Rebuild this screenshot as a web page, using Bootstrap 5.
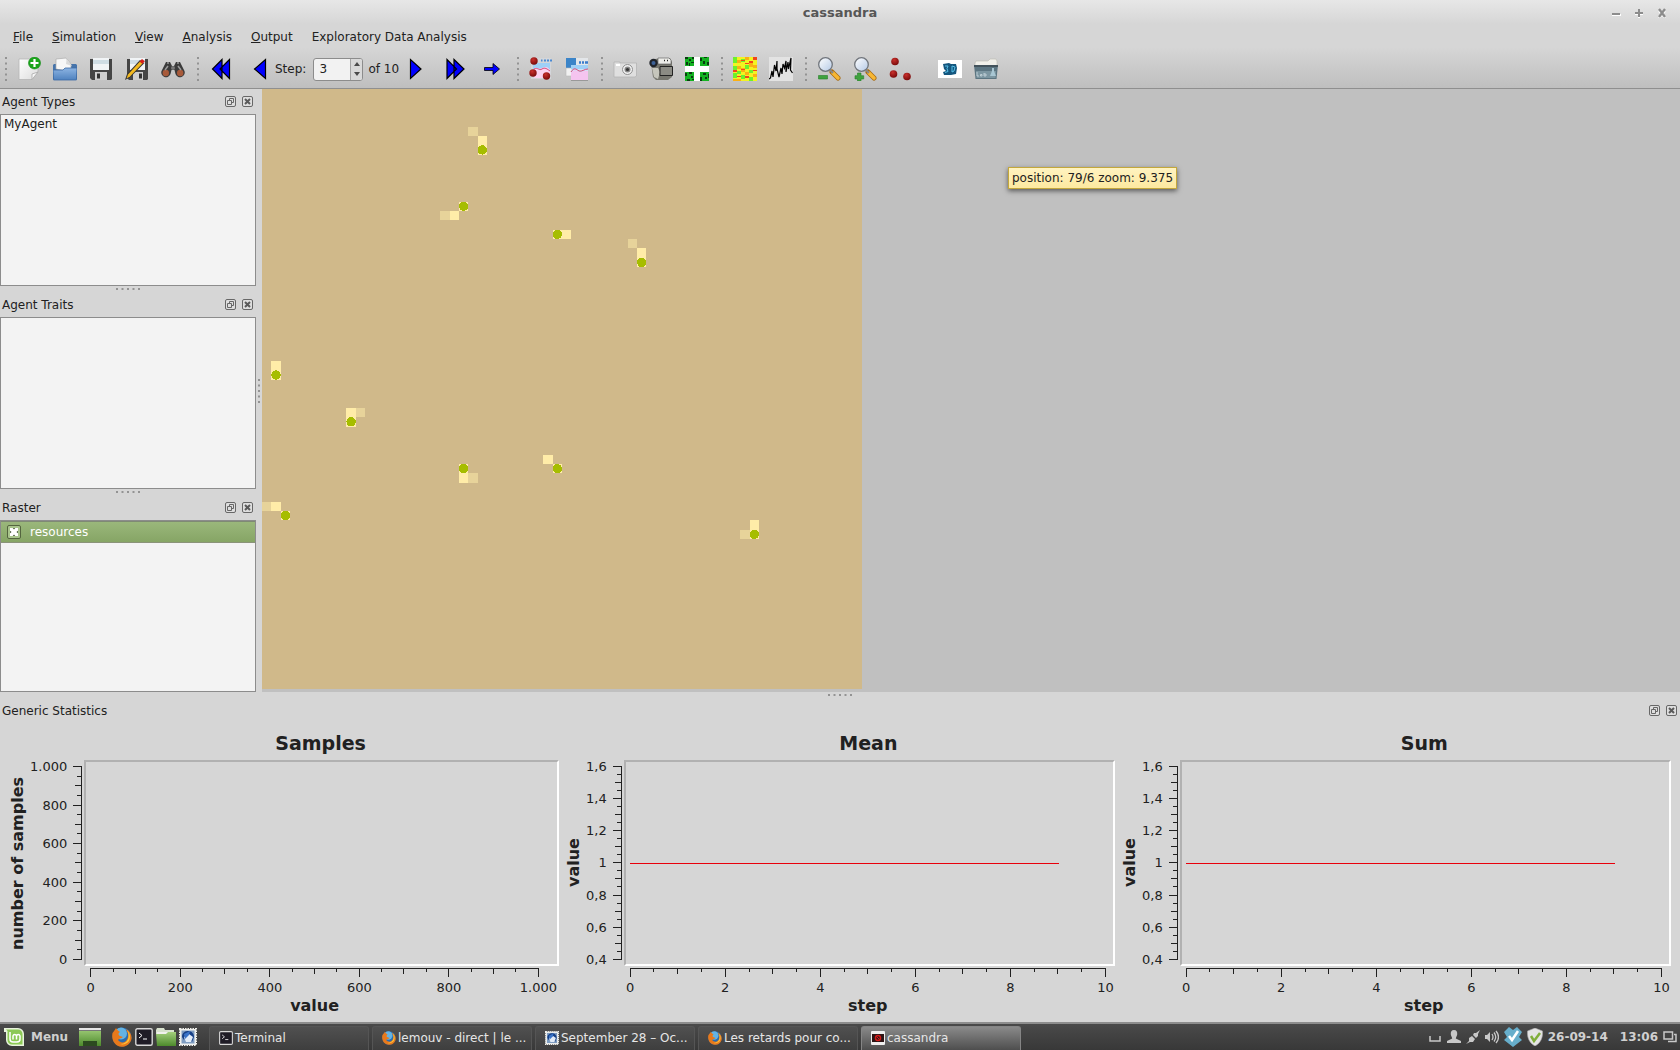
<!DOCTYPE html>
<html lang="en">
<head>
<meta charset="utf-8">
<meta name="viewport" content="width=device-width, initial-scale=1">
<title>cassandra</title>
<link href="https://cdn.jsdelivr.net/npm/bootstrap@5.3.0/dist/css/bootstrap.min.css" rel="stylesheet">
<style>
body{font:12px/16px "DejaVu Sans",sans-serif;color:#212121;background:#d6d6d6}
button,input{font:inherit;color:inherit}
svg{display:block;flex:none}
.plain{border:0;background:none;padding:0}
.head{background:linear-gradient(#e7e7e7 0,#d6d6d6 24px,#d6d6d6 47px,#bfbfbf 88px);border-bottom:1px solid #8f8f8f}
.titlebar{height:26px;font-size:13px;font-weight:bold;color:#565656}
.side-slot{width:76px}
.win-btns{width:76px;gap:13px;padding-right:13px}
.menus{height:22px;padding-left:4px;gap:1px}
.menus a{color:inherit;text-decoration:none;padding:0 9px}
.tools{height:40px;gap:1px;padding-top:2px}
.grip{width:11px;display:flex;justify-content:center}
.tool{width:36px;height:28px;display:flex;align-items:center;justify-content:center}
.transport{padding-right:4px}
.spin{width:50px;height:23px;margin:0 5px 0 7px;border:1px solid #8c8c8c;border-radius:3px;background:#f2f2f2;overflow:hidden}
.spin input{width:36px;border:0;padding:0 0 0 5px;background:none;appearance:textfield;-moz-appearance:textfield;outline:0}
.spin input::-webkit-inner-spin-button{appearance:none;-webkit-appearance:none;margin:0}
.spin-arrows{width:12px;background:#d9d9d9;border-left:1px solid #a5a5a5}
.lab-group{padding-left:12px}
.dock{width:256px}
.dock-head{height:25px;padding:0 3px 0 2px}
.dock-btns{gap:6px}
.list-pane{flex:1 1 0;min-height:0;background:#f3f3f3;border:1px solid #8c8c8c}
.list-pane .entry{padding:1px 3px;line-height:16px}
.entry-on{height:22px;padding-left:6px;gap:9px;color:#fff;background:linear-gradient(#9ab77b,#86a565);border-top:1px solid #7f8a74;border-bottom:1px solid #8a9379}
.tick{appearance:none;width:14px;height:14px;margin:0;border:1px solid #54653f;border-radius:2px;background:#a9c58c;display:grid;place-items:center}
.tick:checked::before,.tick:checked::after{content:"";grid-area:1/1;width:8px;height:8px;background:#4c5c3a}
.tick:checked::after{background:#fff;clip-path:polygon(0 0,34% 0,50% 20%,66% 0,100% 0,100% 34%,80% 50%,100% 66%,100% 100%,66% 100%,50% 80%,34% 100%,0 100%,0 66%,20% 50%,0 34%)}
.split-h{height:6px;display:flex;align-items:center;justify-content:center}
.split-v{width:6px;display:flex;align-items:center;justify-content:center}
.view{background:#c0c0c0;padding-bottom:3px}
.tip{left:746px;top:78px;height:22px;line-height:18px;padding:1px 3px;background:linear-gradient(#fff3c0,#fde9a0);border:1px solid #c3a73c;box-shadow:0 2px 5px rgba(0,0,0,.55)}
.plots{padding:8px 6px 6px}
.plot{flex:1 1 0;display:grid;grid-template-columns:24px auto 9px 1fr;grid-template-rows:29px 206px auto;padding-right:3px;--l:6px;--r:9px}
.plot-wide{--r:20px}
.plot h2{grid-column:4;margin:0;font-size:19px;line-height:24px;font-weight:bold;text-align:center}
.y-name{grid-column:1;grid-row:2;writing-mode:vertical-rl;transform:rotate(180deg);font-size:16px;line-height:24px;font-weight:bold;text-align:center}
.y-labels{grid-column:2;grid-row:2;padding:6px 6px 6px 0;font-size:13px;text-align:right}
.y-labels span{height:1px;line-height:1px}
.y-ticks{grid-column:3;grid-row:2;margin:6px 0;border-right:1px solid #212121;align-items:flex-end}
.y-ticks i{height:1px;width:4px;background:#212121}
.y-ticks i:nth-child(2n+1){width:6px}
.y-ticks i:nth-child(4n+1){width:8px}
.frame{grid-column:4;grid-row:2;margin-left:2px;border:2px solid;border-color:#b1b1b1 #fff #fff #b1b1b1;padding-left:4px;padding-right:6px}
.curve{height:1px;background:#e8000b}
.x-axis{grid-column:4;grid-row:3;margin:2px var(--r) 0 calc(var(--l) + 2px)}
.x-ticks{border-top:1px solid #212121;height:9px}
.x-ticks i{width:1px;height:3px;background:#212121}
.x-ticks i:nth-child(2n+1){height:5px}
.x-ticks i:nth-child(4n+1){height:8px}
.x-labels{font-size:13px;line-height:16px;margin-top:3px}
.x-labels span{width:1px;display:flex;justify-content:center;white-space:nowrap}
.x-name{font-size:16px;line-height:20px;font-weight:bold;text-align:center}
.panel-bar{height:28px;color:#e6e6e6;background:linear-gradient(#4a4a4a,#383838);border-top:2px solid #8d8d8d}
.menu-btn{gap:7px;padding:0 0 0 4px;width:79px;font-weight:bold;color:#cfcfcf}
.launch{gap:3px;padding:0 12px 0 11px}
.tasks{gap:3px;padding-top:2px}
.task{width:160px;gap:2px;padding:0 4px 2px 9px;white-space:nowrap;border:1px solid #555;border-bottom:0;border-radius:3px 3px 0 0;background:linear-gradient(#505050,#3e3e3e)}
.task-on{background:linear-gradient(#8a8a8a,#4e4e4e);border-color:#858585}
.tray{gap:5px;padding-right:3px;font-weight:bold;color:#d0d0d0}
.clock{gap:12px}
</style>
</head>
<body>
<svg width="0" height="0" class="position-absolute" aria-hidden="true">
<defs>
<linearGradient id="gPaper" x1="0" y1="0" x2="1" y2="1"><stop offset="0" stop-color="#fff"/><stop offset="1" stop-color="#dcdcdc"/></linearGradient>
<linearGradient id="gBlue" x1="0" y1="0" x2="0" y2="1"><stop offset="0" stop-color="#8db4e2"/><stop offset="1" stop-color="#4f82bf"/></linearGradient>
<linearGradient id="gGreen" x1="0" y1="0" x2="0" y2="1"><stop offset="0" stop-color="#a3cf7c"/><stop offset="1" stop-color="#4d8a2c"/></linearGradient>
<linearGradient id="gLens" x1="0" y1="0" x2="1" y2="1"><stop offset="0" stop-color="#fff"/><stop offset="1" stop-color="#b4c9e6"/></linearGradient>
<radialGradient id="gRed" cx=".4" cy=".3" r=".7"><stop offset="0" stop-color="#c8302c"/><stop offset="1" stop-color="#7a0b0b"/></radialGradient>
<symbol id="dotsV" viewBox="0 0 2 24"><path d="M0 0h2v2H0zM0 5.500h2v2H0zM0 11h2v2H0zM0 16.500h2v2H0zM0 22h2v2H0z" fill="#939393"/></symbol>
<symbol id="dotsH" viewBox="0 0 24 2"><path d="M0 0h2v2H0zM5.500 0h2v2h-2zM11 0h2v2h-2zM16.500 0h2v2h-2zM22 0h2v2h-2z" fill="#939393"/></symbol>
<symbol id="float" viewBox="0 0 11 11"><rect x=".5" y=".5" width="10" height="10" rx="1.500" fill="#dedede" stroke="#676767"/><path d="M4.500 4V2.500h4v4H7M2.500 4.500h4v4h-4z" fill="none" stroke="#676767"/></symbol>
<symbol id="shut" viewBox="0 0 11 11"><rect x=".5" y=".5" width="10" height="10" rx="1.500" fill="#dedede" stroke="#676767"/><path d="M3 3l5 5M8 3L3 8" stroke="#5a5a5a" stroke-width="2"/></symbol>
<symbol id="lens" viewBox="0 0 24 24"><path d="M15 15l6 6" stroke="#a86a10" stroke-width="5" stroke-linecap="round"/><path d="M16 16l5 5" stroke="#f7b733" stroke-width="3.500" stroke-linecap="round"/><path d="M13 13l3 3" stroke="#888" stroke-width="2"/><circle cx="8.500" cy="7.500" r="6.800" fill="url(#gLens)" stroke="#70757c" stroke-width="1.300"/></symbol>
<symbol id="fox" viewBox="0 0 20 20"><circle cx="10" cy="10" r="9.500" fill="#2a6cae"/><circle cx="9" cy="6.500" r="6" fill="#63b3e4"/><path d="M.5 6C2 4 3 3 4 1c1 2 3 3 4 4-2 1-2 3 0 4l3 1c-2 2-4 1-5 3 3 4 9 3 10-3 1-3-1-5-2-8 4 2 6 6 5.500 10C18.500 17 14 20 9.500 19.800 3 19-1 13 .5 6z" fill="#e8791b"/><path d="M15 3c3 3 4 7 2 11-2 3-6 4-9 3 5 0 8-3 8.500-7 .3-3-.5-5-1.500-7z" fill="#f9c23c"/></symbol>
<symbol id="term" viewBox="0 0 18 18"><rect x=".8" y=".8" width="16.400" height="16.400" rx="1.500" fill="#1f1c26" stroke="#d8d8d8" stroke-width="1.400"/><path d="M4 5l3 2.500L4 10M8 11h4" fill="none" stroke="#fff"/></symbol>
<symbol id="mail" viewBox="0 0 18 18"><rect x="1" y="1" width="16" height="16" fill="#f0f0ec" stroke="#f0f0ec" stroke-width="2" stroke-dasharray="1.500 1"/><rect x="2.500" y="2.500" width="13" height="13" fill="#7e9cc0"/><path d="M3 9c0-5 4-6 6-6 4 0 6 3 6 6l-2 5-3-4-4-1-1 3z" fill="#163f86"/><path d="M5 9l5-3 4 3-2 5H7z" fill="#e2ecf8"/><path d="M5 6l6-3-1 4-4 4z" fill="#3973c7"/></symbol>
</defs>
</svg>
<div class="min-vh-100 d-flex flex-column">
<header class="head">
  <div class="titlebar d-flex align-items-center justify-content-between">
    <div class="side-slot"></div><span>cassandra</span>
    <div class="win-btns d-flex align-items-center justify-content-end">
      <button class="plain" aria-label="Minimize"><svg width="10" height="10"><path d="M1 7h9" stroke="#fff" stroke-width="2"/><path d="M1 6h8" stroke="#8c8c8c" stroke-width="2"/></svg></button>
      <button class="plain" aria-label="Maximize"><svg width="10" height="10"><path d="M1 6h8M5 2v8" stroke="#fff" stroke-width="2"/><path d="M1 5h8M5 1v8" stroke="#8c8c8c" stroke-width="2"/></svg></button>
      <button class="plain" aria-label="Close"><svg width="10" height="10"><path d="M2 3l6 7M8 3l-6 7" stroke="#fff" stroke-width="2"/><path d="M2 1l6 8M8 1L2 9" stroke="#8c8c8c" stroke-width="2.300"/></svg></button>
    </div>
  </div>
  <nav class="menus d-flex align-items-center" aria-label="Menu bar">
    <a href="#"><u>F</u>ile</a><a href="#"><u>S</u>imulation</a><a href="#"><u>V</u>iew</a><a href="#"><u>A</u>nalysis</a><a href="#"><u>O</u>utput</a><a href="#">Exploratory Data Analysis</a>
  </nav>
  <div class="tools d-flex align-items-center" role="toolbar" aria-label="Tools">
    <div class="d-flex align-items-center">
      <span class="grip"><svg width="2" height="24"><use href="#dotsV"/></svg></span>
      <button class="plain tool" aria-label="New"><svg width="24" height="24"><path d="M2 2h19v13l-6 7.500H2z" fill="url(#gPaper)" stroke="#b5b5b5" stroke-width=".8"/><path d="M21 15l-6 7.500V17z" fill="#f7f7f7" stroke="#aaa" stroke-width=".8"/><circle cx="17.500" cy="6" r="6" fill="#1aa51a" stroke="#0d8a10" stroke-width=".6"/><path d="M13.500 6h8M17.500 2v8" stroke="#fff" stroke-width="2.200"/></svg></button>
      <button class="plain tool" aria-label="Open"><svg width="24" height="24"><path d="M0 8l1-1h22l1 1v14H0z" fill="#4674ab"/><path d="M3 12V2l10-1 5 6v8z" fill="#f7f7f7" stroke="#aaa" stroke-width=".7"/><path d="M13 1c1 3 0 4 0 6l6 2z" fill="#dadada"/><path d="M0 13h10l2-2h12l-.6 12H.6z" fill="url(#gBlue)" stroke="#3d6ba4" stroke-width=".8"/></svg></button>
      <button class="plain tool" aria-label="Save"><svg width="24" height="24"><path d="M1 2h22v20l-1 1H3l-2-2z" fill="#454545"/><path d="M4 1h16v12H4z" fill="#f1f4f6"/><path d="M4 3h16v4H4z" fill="#cfdde4"/><path d="M6 15h12v8H6z" fill="#cfcfcf"/><path d="M8 16.500h3v5H8z" fill="#333"/></svg></button>
      <button class="plain tool" aria-label="Save as"><svg width="24" height="24"><path d="M2 2h21v20l-1 1H4l-2-2z" fill="#454545"/><path d="M5 1h15v12H5z" fill="#f1f4f6"/><path d="M5 3h15v4H5z" fill="#cfdde4"/><path d="M8 15h10v8H8z" fill="#cfcfcf"/><path d="M14 16.500h3v5h-3z" fill="#333"/><path d="M0 23l2-6L15 3l4 3.500L5.500 20z" fill="#333"/><path d="M1.500 21.500L3 17.500 15 4.500l2.500 2L5 19.500z" fill="#f3b91f"/><path d="M14.500 4.500L17 2l2.800 2.300L17.500 7z" fill="#d6201c"/></svg></button>
      <button class="plain tool" aria-label="Find"><svg width="24" height="24"><path d="M5 5l4 0 2 4h2l2-4 4 0 4.500 9a4.500 4.500 0 1 1-9 3l-1-4h-3l-1 4a4.500 4.500 0 1 1-9-3z" fill="#3b3b3b"/><circle cx="4.800" cy="16" r="3.200" fill="#a85a3a"/><circle cx="19.200" cy="16" r="3.200" fill="#a85a3a"/><path d="M6 6l2 0M16 6h2M7 9l-3 4M17 9l3 4" stroke="#9b9b9b" stroke-width="1.500"/><circle cx="12" cy="11" r="2" fill="#777"/></svg></button>
    </div>
    <div class="transport d-flex align-items-center">
      <span class="grip"><svg width="2" height="24"><use href="#dotsV"/></svg></span>
      <button class="plain tool" aria-label="First step"><svg width="24" height="24"><path d="M13 2.500v19L3.500 12zM20.500 2.500v19L11 12z" fill="#00f" stroke="#000" stroke-width="1.200"/></svg></button>
      <button class="plain tool" aria-label="Previous step"><svg width="24" height="24"><path d="M20.500 2.500v19L9.500 12z" fill="#00f" stroke="#000" stroke-width="1.200"/></svg></button>
      <label for="step">Step:</label>
      <div class="spin d-flex"><input id="step" type="number" value="3" min="0" max="10">
        <div class="spin-arrows d-flex flex-column justify-content-around align-items-center"><button class="plain" aria-label="Step up"><svg width="6" height="4"><path d="M0 4l3-4 3 4z" fill="#4a4a4a"/></svg></button><button class="plain" aria-label="Step down"><svg width="6" height="4"><path d="M0 0l3 4 3-4z" fill="#4a4a4a"/></svg></button></div></div>
      <span>of 10</span>
      <button class="plain tool" aria-label="Play"><svg width="24" height="24"><path d="M5.500 2.500v19L16 12z" fill="#00f" stroke="#000" stroke-width="1.200"/></svg></button>
      <button class="plain tool" aria-label="Last step"><svg width="24" height="24"><path d="M6 2.500v19L15.500 12zM13 2.500v19L23 12z" fill="#00f" stroke="#000" stroke-width="1.200"/></svg></button>
      <button class="plain tool" aria-label="Go to step"><svg width="24" height="24"><path d="M7.500 10.500h8.500v-4L22.500 12 16 17.500v-4H7.500z" fill="#00f" stroke="#000" stroke-width=".8"/></svg></button>
    </div>
    <div class="d-flex align-items-center">
      <span class="grip"><svg width="2" height="24"><use href="#dotsV"/></svg></span>
      <button class="plain tool" aria-label="Agent chart"><svg width="24" height="24"><path d="M2 1h20v21H2z" fill="#d3d6da"/><path d="M4 6h17v10H4z" fill="#9fd0f7"/><path d="M5 11c4-1 5 2 8 0 3-1 5-2 8 2v8H5z" fill="#fbd3f0"/><path d="M5 12c4-2 5 2 8 0 3-2 5 0 8 2" stroke="#d84a78" fill="none"/><path d="M12 3.500h1.500M15 3.500h2M18 3.500h2M21 3.500h2" stroke="#4a8ad4" stroke-width="2"/><circle cx="5" cy="4" r="3.700" fill="url(#gRed)"/><circle cx="4" cy="16" r="3.700" fill="url(#gRed)"/><circle cx="17.500" cy="19" r="3.700" fill="url(#gRed)"/></svg></button>
      <button class="plain tool" aria-label="Raster chart"><svg width="24" height="24"><path d="M1 1h10v10H1z" fill="#3b84c8"/><path d="M11 1h12v10H11z" fill="#e3e6e9"/><path d="M1 11h6v8H1z" fill="#f1f1f1" stroke="#bbb" stroke-width=".6"/><path d="M14 5.500h2M17 5.500h2M20 5.500h3" stroke="#3b7ccc" stroke-width="2.500"/><path d="M6 8h17v15H6z" fill="#cfe4f8"/><path d="M6 8h17v4H6z" fill="#9fd0f7"/><path d="M6 16c3-4 5-3 8-1 3 1 5-2 9-1v9H6z" fill="#f5c4ef"/><path d="M6 15c3-5 5-3 8-1 3 1 5-2 9-2" stroke="#d84a78" fill="none"/><path d="M6 23.500h17" stroke="#999"/></svg></button>
    </div>
    <div class="d-flex align-items-center">
      <span class="grip"><svg width="2" height="24"><use href="#dotsV"/></svg></span>
      <button class="plain tool" aria-label="Snapshot"><svg width="24" height="24"><path d="M1 5l6 0 0 1h16.500v13L22 20H1z" fill="#dfdfdf" stroke="#b4b4b4" stroke-width=".8"/><path d="M3 7h4v2H3z" fill="#fff"/><circle cx="14.500" cy="12.500" r="5" fill="#f2f2f2" stroke="#909090"/><circle cx="14.500" cy="12.500" r="3" fill="#888"/><circle cx="14.500" cy="12.500" r="1.600" fill="#333"/></svg></button>
      <button class="plain tool" aria-label="Record movie"><svg width="24" height="24"><path d="M2 6l2 14 3 3h12l4-3V5l-2-4h-7L6 2z" fill="#77776f"/><path d="M9 1h11l2 2v4H9z" fill="#ecece8" stroke="#555" stroke-width=".6"/><circle cx="4.500" cy="6" r="4.200" fill="#20242a"/><circle cx="4.500" cy="6" r="2" fill="#3d6296"/><path d="M3 11h6l2 4-2 7-4-2z" fill="#c6c6bc"/><path d="M11 9.500h12.500v9H11z" fill="#8b8b84" stroke="#222"/><path d="M15 3.500h1M18 3.500h1" stroke="#222" stroke-width="1.500"/></svg></button>
      <button class="plain tool" aria-label="Tile view"><svg width="24" height="24"><path d="M0 0h24v24H0z" fill="#fff"/><path d="M0 0h9v9H0zM15 0h9v9h-9zM0 15h9v9H0zM15 15h9v9h-9z" fill="#13b321"/><path d="M0 0h3v2H0zM4 2h2v2H4zM1 5h2v3H1zM6 5h3v1H6zM7 0h2v2H7zM15 1h2v3h-2zM19 0h3v1h-3zM18 4h2v3h-2zM22 5h2v3h-2zM0 16h2v3H0zM4 15h3v2H4zM6 19h2v2H6zM2 22h3v2H2zM15 20h2v4h-2zM18 16h3v2h-3zM20 20h2v2h-2zM23 17h1v4h-1zM4 6h1v3H4zM7 22h2v1H7z" fill="#093d10"/></svg></button>
    </div>
    <div class="d-flex align-items-center">
      <span class="grip"><svg width="2" height="24"><use href="#dotsV"/></svg></span>
      <button class="plain tool" aria-label="Heat map"><svg width="24" height="24" shape-rendering="crispEdges"><path d="M0 0h24v24H0z" fill="#f3f321"/><path d="M0 0h4v6H0zM8 2h4v3H8zM0 9h4v4H0zM4 14h4v3H4zM0 16h4v5H0zM12 8h4v4h-4zM8 18h4v4H8zM16 13h4v3h-4zM16 20h4v4h-4z" fill="#6df02c"/><path d="M4 3h4v3H4zM12 0h4v3h-4zM16 5h4v5h-4zM4 9h4v3H4zM8 11h4v4H8zM20 8h4v3h-4zM12 15h4v3h-4zM20 17h4v3h-4zM0 22h8v2H0z" fill="#fbb013"/><path d="M20 0h4v3h-4zM8 3h4v1H8zM16 4h4v2h-4zM0 13h4v2H0zM12 6h4v1h-4zM8 12h4v1H8zM20 13h4v1h-4zM12 19h4v2h-4zM4 19h4v1H4z" fill="#f2451c"/></svg></button>
      <button class="plain tool" aria-label="Time series"><svg width="24" height="24"><path d="M0 0h24v24H0z" fill="#e3e3e3"/><path d="M0 22l1.500-1L3 14l1 6L5.500 8 7 14l1-10 0 8 2 8 2-9 1 6 1-10 1.500 4L17 4l0 11 2-10 .5 7L22 1l-.5 12 2 3" fill="none" stroke="#000" stroke-width="1.200"/></svg></button>
    </div>
    <div class="d-flex align-items-center">
      <span class="grip"><svg width="2" height="24"><use href="#dotsV"/></svg></span>
      <button class="plain tool" aria-label="Zoom out"><svg width="24" height="24"><use href="#lens"/><path d="M1.500 18.500h9v3.500h-9z" fill="#3fa23f" stroke="#267f2a" stroke-width=".6"/></svg></button>
      <button class="plain tool" aria-label="Zoom in"><svg width="24" height="24"><use href="#lens"/><path d="M4.500 16h3.500v2.700h2.700V22H8v2H4.500V22H2v-3.300h2.500z" fill="#3fa23f" stroke="#267f2a" stroke-width=".6"/></svg></button>
      <button class="plain tool" aria-label="Agents"><svg width="24" height="24"><circle cx="6" cy="4.500" r="3.800" fill="url(#gRed)"/><circle cx="4.500" cy="17" r="3.800" fill="url(#gRed)"/><circle cx="18" cy="19.500" r="3.800" fill="url(#gRed)"/></svg></button>
    </div>
    <div class="lab-group d-flex align-items-center">
      <button class="plain tool" aria-label="3D view"><svg width="24" height="24"><path d="M0 3h24v18H0z" fill="#fff"/><path d="M5 7l6-1 2 1 5 0 1 4-1 6-5 1-7 0-1-3 3-1-2-2z" fill="#14577f"/><path d="M7 9h3l-1 2.500 1 3-3 1M14 9l0 6 2-1 1-4z" fill="none" stroke="#56bfe8" stroke-width="1"/></svg></button>
      <button class="plain tool" aria-label="Laboratory"><svg width="24" height="24"><path d="M1 6l1-2h12l2-2h6l1 2v6H1z" fill="#f1f0ea" stroke="#bbb8b0" stroke-width=".6"/><path d="M0 8h24l-1.500 14h-21z" fill="#5c7581"/><path d="M0 8h24v2H0z" fill="#43535c"/><path d="M2 14h20l-.5 7h-19z" fill="#7c96a1"/><path d="M3 15v4h2M6.500 17.500h1.500V19H6.500zM10 16v3h2v-2h-2" fill="none" stroke="#d5e2e7" stroke-width=".7"/><path d="M18 11h2v3l2 5h-6l2-5z" fill="#a8c6d3"/></svg></button>
    </div>
  </div>
</header>

<main class="d-flex flex-grow-1">
  <aside class="dock d-flex flex-column">
    <div class="dock-head d-flex align-items-center justify-content-between"><span>Agent Types</span><span class="dock-btns d-flex"><button class="plain" aria-label="Float Agent Types"><svg width="11" height="11"><use href="#float"/></svg></button><button class="plain" aria-label="Close Agent Types"><svg width="11" height="11"><use href="#shut"/></svg></button></span></div>
    <div class="list-pane"><div class="entry">MyAgent</div></div>
    <div class="split-h"><svg width="24" height="2"><use href="#dotsH"/></svg></div>
    <div class="dock-head d-flex align-items-center justify-content-between"><span>Agent Traits</span><span class="dock-btns d-flex"><button class="plain" aria-label="Float Agent Traits"><svg width="11" height="11"><use href="#float"/></svg></button><button class="plain" aria-label="Close Agent Traits"><svg width="11" height="11"><use href="#shut"/></svg></button></span></div>
    <div class="list-pane"></div>
    <div class="split-h"><svg width="24" height="2"><use href="#dotsH"/></svg></div>
    <div class="dock-head d-flex align-items-center justify-content-between"><span>Raster</span><span class="dock-btns d-flex"><button class="plain" aria-label="Float Raster"><svg width="11" height="11"><use href="#float"/></svg></button><button class="plain" aria-label="Close Raster"><svg width="11" height="11"><use href="#shut"/></svg></button></span></div>
    <div class="list-pane"><div class="entry-on d-flex align-items-center"><input class="tick" type="checkbox" id="resources" checked><label for="resources">resources</label></div></div>
  </aside>
  <div class="split-v"><svg width="2" height="24"><use href="#dotsV"/></svg></div>
  <section class="view flex-grow-1 position-relative" aria-label="Simulation view">
    <svg id="world" width="600" height="600" viewBox="0 0 64 64" shape-rendering="crispEdges"><rect width="64" height="64" fill="#d0b98a"/></svg>
    <div class="tip position-absolute text-nowrap">position: 79/6 zoom: 9.375</div>
  </section>
</main>

<section aria-label="Generic Statistics">
  <div class="split-h"><svg width="24" height="2"><use href="#dotsH"/></svg></div>
  <div class="dock-head d-flex align-items-center justify-content-between"><span>Generic Statistics</span><span class="dock-btns d-flex"><button class="plain" aria-label="Float Generic Statistics"><svg width="11" height="11"><use href="#float"/></svg></button><button class="plain" aria-label="Close Generic Statistics"><svg width="11" height="11"><use href="#shut"/></svg></button></span></div>
  <div class="plots d-flex">
    <div class="plot plot-wide">
      <h2>Samples</h2>
      <div class="y-name">number of samples</div>
      <div class="y-labels d-flex flex-column justify-content-between"><span>1.000</span><span>800</span><span>600</span><span>400</span><span>200</span><span>0</span></div>
      <div class="y-ticks d-flex flex-column justify-content-between" data-ticks="21"></div>
      <div class="frame"></div>
      <div class="x-axis"><div class="x-ticks d-flex justify-content-between" data-ticks="21"></div>
        <div class="x-labels d-flex justify-content-between"><span>0</span><span>200</span><span>400</span><span>600</span><span>800</span><span>1.000</span></div>
        <div class="x-name">value</div></div>
    </div>
    <div class="plot">
      <h2>Mean</h2>
      <div class="y-name">value</div>
      <div class="y-labels d-flex flex-column justify-content-between"><span>1,6</span><span>1,4</span><span>1,2</span><span>1</span><span>0,8</span><span>0,6</span><span>0,4</span></div>
      <div class="y-ticks d-flex flex-column justify-content-between" data-ticks="25"></div>
      <div class="frame d-flex align-items-center"><div class="curve" style="width:90%"></div></div>
      <div class="x-axis"><div class="x-ticks d-flex justify-content-between" data-ticks="21"></div>
        <div class="x-labels d-flex justify-content-between"><span>0</span><span>2</span><span>4</span><span>6</span><span>8</span><span>10</span></div>
        <div class="x-name">step</div></div>
    </div>
    <div class="plot">
      <h2>Sum</h2>
      <div class="y-name">value</div>
      <div class="y-labels d-flex flex-column justify-content-between"><span>1,6</span><span>1,4</span><span>1,2</span><span>1</span><span>0,8</span><span>0,6</span><span>0,4</span></div>
      <div class="y-ticks d-flex flex-column justify-content-between" data-ticks="25"></div>
      <div class="frame d-flex align-items-center"><div class="curve" style="width:90%"></div></div>
      <div class="x-axis"><div class="x-ticks d-flex justify-content-between" data-ticks="21"></div>
        <div class="x-labels d-flex justify-content-between"><span>0</span><span>2</span><span>4</span><span>6</span><span>8</span><span>10</span></div>
        <div class="x-name">step</div></div>
    </div>
  </div>
</section>

<footer class="panel-bar d-flex">
  <button class="plain menu-btn d-flex align-items-center"><svg width="20" height="20"><path d="M0 1h14a6 6 0 0 1 6 6v12H8a6 6 0 0 1-6-6V5H0z" fill="#e9f4dd"/><path d="M2 2.500h12a4.500 4.500 0 0 1 4.500 4.500v10.500H8A4.500 4.500 0 0 1 3.500 13V4z" fill="#8cc956"/><path d="M6 5v7a3 3 0 0 0 3 3h4a3 3 0 0 0 3-3V9a1.800 1.800 0 0 0-3.500 0v3.500V9A1.800 1.800 0 0 0 9 9v3.500" fill="none" stroke="#fff" stroke-width="1.500"/></svg>Menu</button>
  <button class="plain" aria-label="Show desktop"><svg width="22" height="20"><path d="M0 1h22v18H0z" fill="url(#gGreen)"/><path d="M0 1h22v3H0z" fill="#e6e6e6"/><path d="M0 3.500h22" stroke="#777"/><path d="M4 14h14v5H4z" fill="#2c4a20"/></svg></button>
  <div class="launch d-flex align-items-center">
    <button class="plain" aria-label="Firefox"><svg width="20" height="20"><use href="#fox"/></svg></button>
    <button class="plain" aria-label="Terminal"><svg width="18" height="18"><use href="#term"/></svg></button>
    <button class="plain" aria-label="Files"><svg width="20" height="20"><path d="M0 3l1-2h7l1 2h9v4H0z" fill="#d9e3cf"/><path d="M1 5h18v13H1z" fill="#f1f1ee"/><path d="M0 7h10l2-2h8v14H1z" fill="url(#gGreen)"/></svg></button>
    <button class="plain" aria-label="Mail"><svg width="18" height="18"><use href="#mail"/></svg></button>
  </div>
  <div class="tasks d-flex">
    <button class="plain task d-flex align-items-center"><svg width="14" height="14"><use href="#term"/></svg>Terminal</button>
    <button class="plain task d-flex align-items-center"><svg width="14" height="14"><use href="#fox"/></svg>lemouv - direct | le ...</button>
    <button class="plain task d-flex align-items-center"><svg width="14" height="14"><use href="#mail"/></svg>September 28 – Oc...</button>
    <button class="plain task d-flex align-items-center"><svg width="14" height="14"><use href="#fox"/></svg>Les retards pour co...</button>
    <button class="plain task task-on d-flex align-items-center"><svg width="14" height="14"><rect width="14" height="14" rx="1" fill="#eee"/><path d="M1 3h12v8H1z" fill="#2c1414"/><circle cx="7" cy="7" r="2.500" fill="none" stroke="#d11919" stroke-width="1.500"/><path d="M5 5l4 4" stroke="#d11919"/></svg>cassandra</button>
  </div>
  <div class="tray d-flex align-items-center ms-auto">
    <svg width="14" height="14"><path d="M2 6v5h10V6" fill="none" stroke="#c8c8c8" stroke-width="1.500"/></svg>
    <svg width="14" height="14"><path d="M7 0c2.500 0 3.500 2 3.200 4.500C10 6 9 7 8.800 8.500L14 11v2H0v-2l5.200-2.500C5 7 4 6 3.800 4.500 3.500 2 4.500 0 7 0z" fill="#c8c8c8"/></svg>
    <svg width="14" height="14"><path d="M0 14l3-3 0-3 3-2 3 3-2 3H4zM14 0l-4 3H8L7 5l3 3 2-2V4z" fill="#c8c8c8"/></svg>
    <svg width="14" height="14"><path d="M0 5h2l3-3v10L2 9H0z" fill="#c8c8c8"/><path d="M7 4q2 3 0 6M9 2.500q3.500 4.500 0 9M11 1q5 6 0 12" fill="none" stroke="#c8c8c8" stroke-width="1.300"/></svg>
    <svg width="18" height="20"><path d="M5 0l4 3 4-3 5 5-3 5 3 3-9 7-9-7 3-3-3-5z" fill="#67aecb"/><path d="M5 9l3 4 6-9" fill="none" stroke="#fff" stroke-width="2.500"/></svg>
    <svg width="16" height="18"><path d="M8 0l7.500 3c.5 7-2 12-7.500 15C2.500 15 0 10 .5 3z" fill="#e4e4e4" stroke="#aaa" stroke-width=".6"/><path d="M4 8l3 5 6-8" fill="none" stroke="#7fae3a" stroke-width="2.500"/></svg>
    <span class="clock d-flex"><span>26-09-14</span><span>13:06</span></span>
    <svg width="14" height="12"><path d="M1 1h8.500v7H1zM5 10.500h8v-7h-2" fill="none" stroke="#c8c8c8" stroke-width="1.500"/></svg>
  </div>
</footer>
</div>
<script src="https://cdn.jsdelivr.net/npm/bootstrap@5.3.0/dist/js/bootstrap.bundle.min.js"></script>
<script>
// Axis ticks: major every fourth, medium every second
document.querySelectorAll('[data-ticks]').forEach(axis => {
  for (let i = 0; i < +axis.dataset.ticks; i++) axis.append(document.createElement('i'));
});
// Each agent: its cell, the cell left one step ago, the cell left two steps ago
const agents = [
  [23,6, 23,5, 22,4], [21,12, 20,13, 19,13], [31,15, 32,15], [40,18, 40,17, 39,16],
  [1,30, 1,29], [9,35, 9,34, 10,34], [21,40, 21,41, 22,41], [31,40, 30,39],
  [2,45, 1,44, 0,44], [52,47, 52,46, 51,47]
];
const world = document.getElementById('world');
const put = (tag, attrs) => {
  const el = document.createElementNS('http://www.w3.org/2000/svg', tag);
  for (const k in attrs) el.setAttribute(k, attrs[k]);
  world.append(el);
};
const cell = (x, y, fill) => put('rect', {x, y, width: 1, height: 1, fill});
agents.forEach(([x, y, x1, y1, x2, y2]) => {
  if (x2 !== undefined) cell(x2, y2, '#e7d39a');
  cell(x1, y1, '#ffeca8');
  cell(x, y, '#ffeca8');
  put('circle', {cx: x + .5, cy: y + .5, r: .5, fill: '#a6bd00'});
});
</script>
</body>
</html>
